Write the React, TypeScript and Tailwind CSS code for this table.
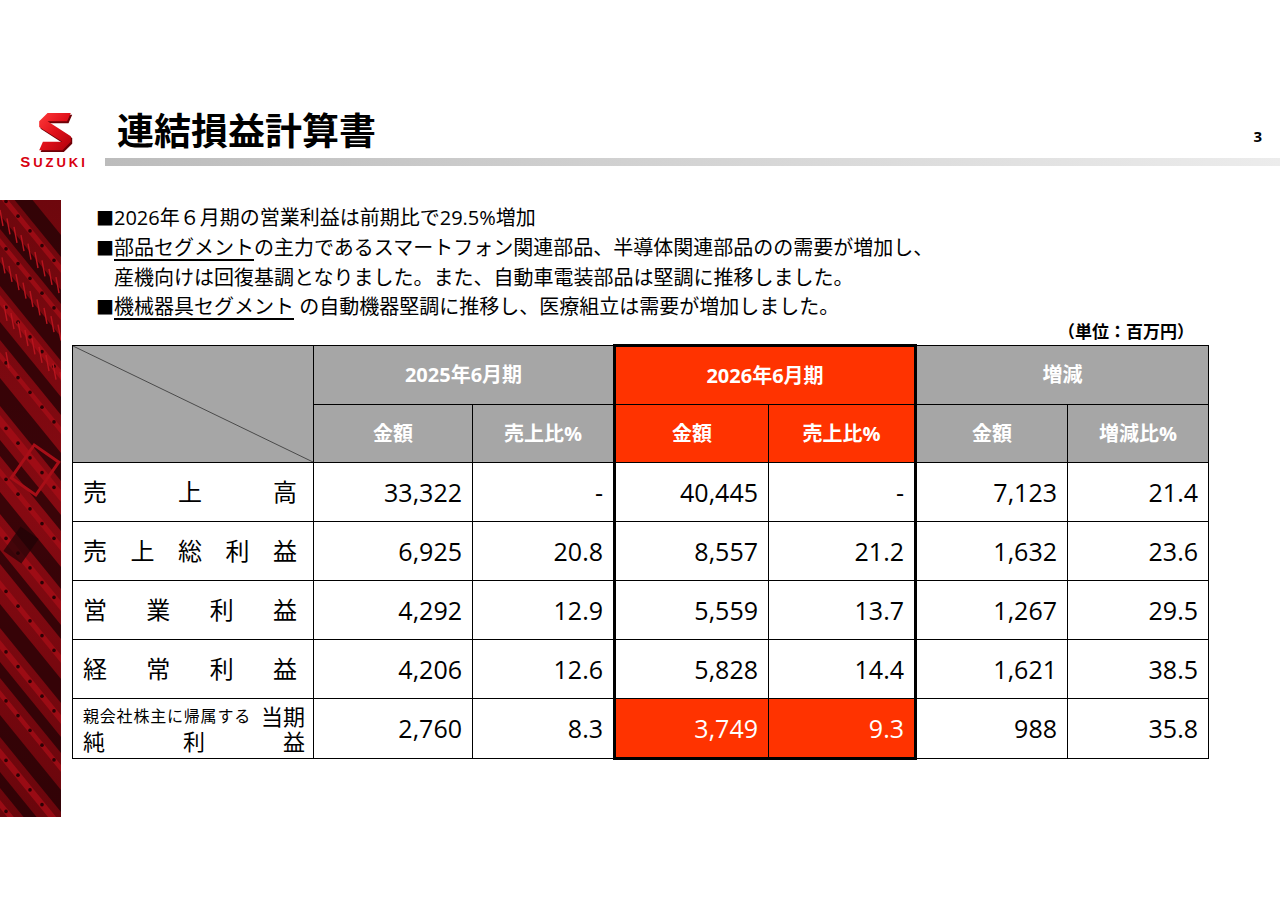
import React from "react";

const FONT = "font-['Open_Sans','Noto_Sans_CJK_JP',sans-serif]";

function SuzukiS() {
  const pts = "37,0 12,0 3,9 3,15 28,31 7,31 3,40 28,40 37,31 37,25 12,9 33,9";
  return (
    <svg width="40" height="40" viewBox="-1 -1 42 43">
      <defs>
        <linearGradient id="sg" x1="0" y1="0" x2="1" y2="1">
          <stop offset="0" stopColor="#ff3a3a" />
          <stop offset="0.5" stopColor="#e0101a" />
          <stop offset="1" stopColor="#b0000a" />
        </linearGradient>
      </defs>
      <polygon points={pts} fill="#6e0006" transform="translate(1.5,2)" />
      <polygon points={pts} fill="url(#sg)" />
    </svg>
  );
}

function Strip() {
  const bands: [number, number, string][] = [
    [-40, 22, "d"], [-10, 8, "r"], [15, 14, "d"], [38, 7, "r"], [62, 24, "d"], [95, 10, "r"],
    [122, 18, "d"], [152, 7, "r"], [178, 28, "d"], [215, 12, "r"], [240, 16, "d"], [268, 8, "r"],
    [292, 22, "d"], [326, 10, "r"], [350, 14, "d"], [380, 8, "r"], [404, 24, "d"], [440, 9, "r"],
    [462, 16, "d"], [490, 7, "r"], [515, 22, "d"], [548, 10, "r"], [572, 16, "d"], [600, 8, "r"],
  ];
  const pins = Array.from({ length: 28 }, (_, i) => i);
  return (
    <svg width="61" height="617" viewBox="0 0 61 617" className="block">
      <defs>
        <linearGradient id="stg" x1="0" y1="0" x2="0" y2="1">
          <stop offset="0" stopColor="#6e070d" />
          <stop offset="0.5" stopColor="#860a12" />
          <stop offset="1" stopColor="#6a060c" />
        </linearGradient>
      </defs>
      <rect x="0" y="0" width="61" height="617" fill="url(#stg)" />
      {bands.map(([y, w, t], i) => (
        <polygon
          key={i}
          points={`0,${y} 61,${y + 75} 61,${y + 75 + w} 0,${y + w}`}
          fill={t === "d" ? "#1a0204" : "#a80e17"}
          opacity={t === "d" ? 0.7 : 0.75}
        />
      ))}
      {bands
        .filter(([, , t]) => t === "r")
        .map(([y, w], i) =>
          [6, 18, 30, 42, 54].map((x) => (
            <circle key={`${i}-${x}`} cx={x} cy={y + (x * 75) / 61 + w / 2} r="1.8" fill="#2a0205" />
          ))
        )}
      {pins.map((i) => (
        <line
          key={i}
          x1={(i * 7) % 61}
          y1={10 + Math.floor(i / 9) * 45 + ((i * 7) % 61) * 1.2}
          x2={((i * 7) % 61) + 3}
          y2={26 + Math.floor(i / 9) * 45 + ((i * 7) % 61) * 1.2}
          stroke="#b8141e"
          strokeWidth="1.4"
        />
      ))}
      <rect x="20" y="250" width="30" height="40" fill="none" stroke="#a80e17" strokeWidth="3" transform="rotate(35 35 270)" />
      <rect x="10" y="330" width="22" height="30" fill="#1e0305" opacity="0.7" transform="rotate(35 21 345)" />
    </svg>
  );
}

const th = "border border-black text-white font-bold text-[20px] text-center align-middle";
const td = "border border-black text-[25px] text-right pr-[10px] align-middle leading-none";
const lbl = "border border-black text-[24px] align-middle pl-[10px] pr-[16px] whitespace-nowrap";

function Label({ chars }: { chars: string[] }) {
  return (
    <div className="flex justify-between">
      {chars.map((c, i) => (
        <span key={i}>{c}</span>
      ))}
    </div>
  );
}

type Row = { label: React.ReactNode; v: string[]; last?: boolean };

const Sq = () => <span className="inline-block w-[18px] text-[18px]">■</span>;

export default function App() {
  const rows: Row[] = [
    { label: <Label chars={["売", "上", "高"]} />, v: ["33,322", "-", "40,445", "-", "7,123", "21.4"] },
    { label: <Label chars={["売", "上", "総", "利", "益"]} />, v: ["6,925", "20.8", "8,557", "21.2", "1,632", "23.6"] },
    { label: <Label chars={["営", "業", "利", "益"]} />, v: ["4,292", "12.9", "5,559", "13.7", "1,267", "29.5"] },
    { label: <Label chars={["経", "常", "利", "益"]} />, v: ["4,206", "12.6", "5,828", "14.4", "1,621", "38.5"] },
    {
      label: (
        <div className="flex flex-col mr-[-8px]">
          <div className="flex items-end justify-between leading-[25px]">
            <span className="text-[16px] tracking-[0.8px]">親会社株主に帰属する</span>
            <span className="text-[22px]">当期</span>
          </div>
          <div className="flex justify-between text-[22px] leading-[25px]">
            <span>純</span>
            <span>利</span>
            <span>益</span>
          </div>
        </div>
      ),
      v: ["2,760", "8.3", "3,749", "9.3", "988", "35.8"],
      last: true,
    },
  ];

  return (
    <div className={`w-[1280px] h-[904px] bg-white overflow-hidden text-black ${FONT}`}>
      <div className="flex pt-[104px]">
        <div className="w-[105px] flex flex-col items-center">
          <div className="mt-[8px] ml-[4px]">
            <SuzukiS />
          </div>
          <div className="mt-[2px] leading-[16px] text-[#d7000f] font-bold font-['Liberation_Sans',sans-serif] tracking-[3px] ml-[3px]">
            <span className="text-[15px]">S</span>
            <span className="text-[13px]">UZUKI</span>
          </div>
        </div>
        <div className="flex-1 flex flex-col">
          <div className="h-[50px] flex items-center justify-between pl-[12px] pr-[18px]">
            <h1 className="text-[37px] leading-[50px] font-bold font-['Noto_Sans_CJK_JP',sans-serif]">連結損益計算書</h1>
            <span className="text-[15px] font-bold mt-[14px]">3</span>
          </div>
          <div className="mt-[4px] h-[8px] bg-gradient-to-r from-[#bcbcbc] to-[#ececec]" />
        </div>
      </div>

      <div className="flex">
        <div className="mt-[29px] w-[61px] h-[617px] shrink-0">
          <Strip />
        </div>
        <div className="ml-[11px] pt-[32px] flex flex-col">
          <div className="pl-[24px] text-[20px] leading-[29px]">
            <div>
              <Sq />2026年６月期の営業利益は前期比で29.5%増加
            </div>
            <div>
              <Sq />
              <span className="underline underline-offset-[4px]">部品セグメント</span>
              の主力であるスマートフォン関連部品、半導体関連部品のの需要が増加し、
            </div>
            <div className="pl-[18px]">産機向けは回復基調となりました。また、自動車電装部品は堅調に推移しました。</div>
            <div>
              <Sq />
              <span className="underline underline-offset-[4px]">機械器具セグメント</span> の自動機器堅調に推移し、医療組立は需要が増加しました。
            </div>
          </div>
          <div className="w-[1136px] text-right pr-[14px] text-[17px] font-bold leading-[18px] font-['Noto_Sans_CJK_JP',sans-serif]">（単位：百万円）</div>
          <table className="mt-[4px] table-fixed border-collapse w-[1136px]">
            <colgroup>
              <col className="w-[241px]" />
              <col className="w-[159px]" />
              <col className="w-[142px]" />
              <col className="w-[154px]" />
              <col className="w-[147px]" />
              <col className="w-[152px]" />
              <col className="w-[141px]" />
            </colgroup>
            <tbody>
              <tr className="h-[59px]">
                <td rowSpan={2} className="relative border border-black bg-[#a6a6a6] p-0">
                  <svg className="absolute inset-0 w-full h-full" viewBox="0 0 100 100" preserveAspectRatio="none">
                    <line x1="0" y1="0" x2="100" y2="100" stroke="#4a4a4a" strokeWidth="1" vectorEffect="non-scaling-stroke" />
                  </svg>
                </td>
                <td colSpan={2} className={`${th} bg-[#a6a6a6]`}>2025年6月期</td>
                <td colSpan={2} className={`${th} bg-[#ff3300] border-x-[3px] border-t-[3px]`}>2026年6月期</td>
                <td colSpan={2} className={`${th} bg-[#a6a6a6]`}>増減</td>
              </tr>
              <tr className="h-[58px]">
                <td className={`${th} bg-[#a6a6a6]`}>金額</td>
                <td className={`${th} bg-[#a6a6a6]`}>売上比%</td>
                <td className={`${th} bg-[#ff3300] border-l-[3px]`}>金額</td>
                <td className={`${th} bg-[#ff3300] border-r-[3px]`}>売上比%</td>
                <td className={`${th} bg-[#a6a6a6]`}>金額</td>
                <td className={`${th} bg-[#a6a6a6]`}>増減比%</td>
              </tr>
              {rows.map((r, i) => (
                <tr key={i} className={r.last ? "h-[60px]" : "h-[59px]"}>
                  <td className={lbl}>{r.label}</td>
                  <td className={td}>{r.v[0]}</td>
                  <td className={td}>{r.v[1]}</td>
                  <td className={`${td} border-l-[3px] ${r.last ? "border-b-[3px] bg-[#ff3300] text-white" : ""}`}>{r.v[2]}</td>
                  <td className={`${td} border-r-[3px] ${r.last ? "border-b-[3px] bg-[#ff3300] text-white" : ""}`}>{r.v[3]}</td>
                  <td className={td}>{r.v[4]}</td>
                  <td className={td}>{r.v[5]}</td>
                </tr>
              ))}
            </tbody>
          </table>
        </div>
      </div>
    </div>
  );
}
